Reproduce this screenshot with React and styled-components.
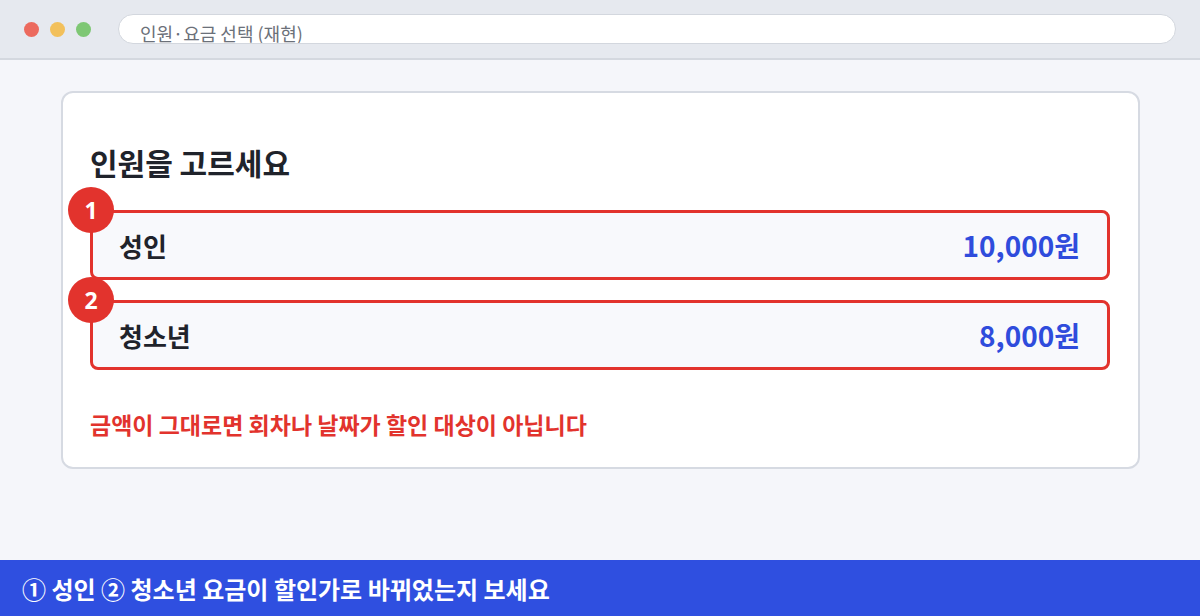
import React from "react";
import styled, { createGlobalStyle } from "styled-components";

const Global = createGlobalStyle`
  html, body { margin: 0; padding: 0; }
  body {
    width: 1200px;
    height: 616px;
    overflow: hidden;
    background: #f5f6fa;
    font-family: "Noto Sans CJK KR", "Noto Sans", sans-serif;
  }
`;

const Page = styled.div`
  width: 1200px;
  height: 616px;
  display: flex;
  flex-direction: column;
  background: #f5f6fa;
`;

const TitleBar = styled.div`
  height: 58px;
  flex: none;
  display: flex;
  align-items: center;
  gap: 27px;
  padding: 0 24px;
  background: #e6e9ef;
  border-bottom: 2px solid #d4d8df;
  box-sizing: content-box;
`;

const Dots = styled.div`
  display: flex;
  gap: 11px;
`;

const Dot = styled.span`
  width: 15px;
  height: 15px;
  border-radius: 50%;
  background: ${(p) => p.$c};
`;

const Address = styled.div`
  flex: 1;
  height: 30px;
  box-sizing: border-box;
  background: #ffffff;
  border: 1px solid #d3d7de;
  border-radius: 15px;
  padding: 5px 0 0 21px;
  font-size: 18px;
  line-height: 26px;
  color: #6b7079;
  overflow: hidden;
`;

const Main = styled.div`
  flex: 1;
  padding: 31px 60px 0 61px;
`;

const Card = styled.div`
  background: #ffffff;
  border: 2px solid #d6dae2;
  border-radius: 12px;
  padding: 49px 28px 23px 27px;
  height: 378px;
  box-sizing: border-box;
`;

const Heading = styled.h1`
  margin: 0 0 28px 0;
  font-size: 30px;
  line-height: 40px;
  font-weight: 700;
  color: #1f232b;
`;

const Rows = styled.div`
  display: flex;
  flex-direction: column;
  gap: 20px;
`;

const Row = styled.div`
  position: relative;
  height: 70px;
  box-sizing: border-box;
  display: flex;
  align-items: center;
  justify-content: space-between;
  padding: 0 27px 0 26px;
  background: #f8f9fc;
  border: 3px solid #e2332d;
  border-radius: 8px;
`;

const Badge = styled.span`
  position: absolute;
  left: -25px;
  top: -26px;
  width: 46px;
  height: 46px;
  border-radius: 50%;
  background: #e2332d;
  color: #ffffff;
  display: flex;
  align-items: center;
  justify-content: center;
  font-family: "Noto Sans", "Noto Sans CJK KR", sans-serif;
  font-weight: 700;
  font-size: 23px;
`;

const Label = styled.span`
  font-size: 26px;
  font-weight: 700;
  color: #1f232b;
`;

const Price = styled.span`
  font-size: 28px;
  font-weight: 700;
  color: #2f4cdc;
`;

const Warning = styled.p`
  margin: 38px 0 0 0;
  font-size: 23px;
  line-height: 32px;
  font-weight: 700;
  color: #e2332d;
`;

const Footer = styled.div`
  height: 56px;
  flex: none;
  display: flex;
  align-items: center;
  padding-left: 22px;
  background: #2f4fe0;
  color: #ffffff;
  font-size: 24px;
  font-weight: 700;
`;

const items = [
  { n: 1, label: "성인", price: "10,000원" },
  { n: 2, label: "청소년", price: "8,000원" },
];

export default function App() {
  return (
    <>
      <Global />
      <Page>
        <TitleBar>
          <Dots>
            <Dot $c="#ec6a5e" />
            <Dot $c="#f2c05b" />
            <Dot $c="#7ec774" />
          </Dots>
          <Address>인원·요금 선택 (재현)</Address>
        </TitleBar>
        <Main>
          <Card>
            <Heading>인원을 고르세요</Heading>
            <Rows>
              {items.map((it) => (
                <Row key={it.n}>
                  <Badge>{it.n}</Badge>
                  <Label>{it.label}</Label>
                  <Price>{it.price}</Price>
                </Row>
              ))}
            </Rows>
            <Warning>금액이 그대로면 회차나 날짜가 할인 대상이 아닙니다</Warning>
          </Card>
        </Main>
        <Footer>① 성인 ② 청소년 요금이 할인가로 바뀌었는지 보세요</Footer>
      </Page>
    </>
  );
}
